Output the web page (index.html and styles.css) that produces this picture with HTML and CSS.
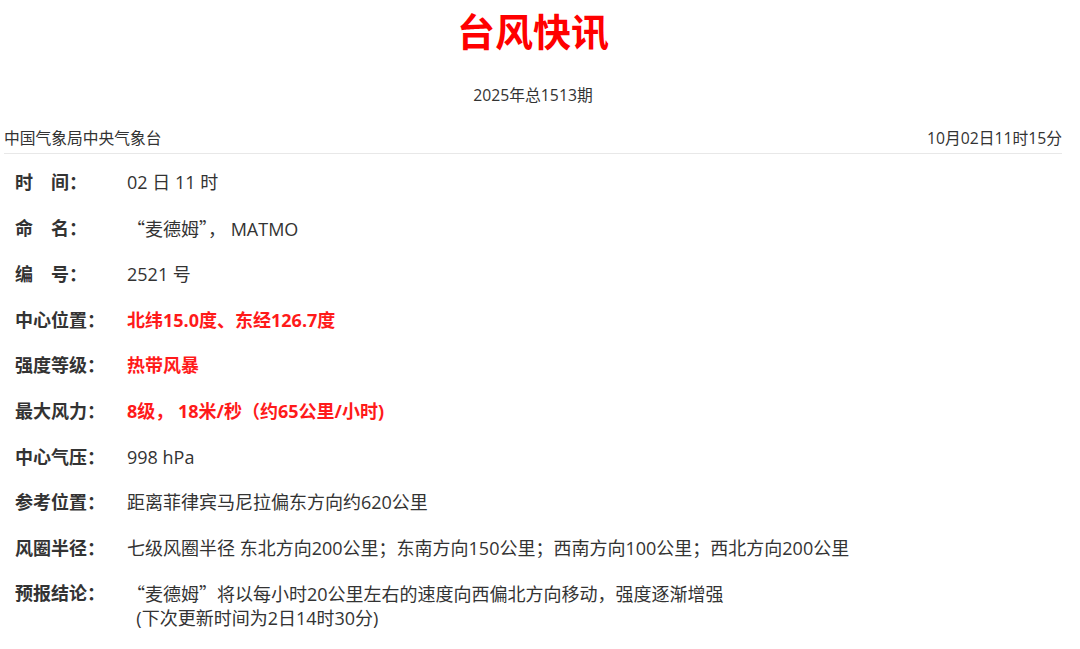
FILE: index.html
```html
<!DOCTYPE html>
<html lang="zh-CN">
<head>
    <meta charset="UTF-8">
    <title>台风快讯</title>
    <meta name="viewport" content="width=device-width, initial-scale=1.0">
    <link rel="stylesheet" href="styles.css">
</head>
<body>
    <div class="page">
        <h1 class="title">台风快讯</h1>
        <div class="issue">2025年总1513期</div>
        <div class="meta">
            <span>中国气象局中央气象台</span>
            <span>10月02日11时15分</span>
        </div>
        <div class="rows">
            <div class="row"><div class="label">时　间：</div><div class="value">02 日 11 时</div></div>
            <div class="row"><div class="label">命　名：</div><div class="value"><span class="cjk">“麦德姆”，</span> MATMO</div></div>
            <div class="row"><div class="label">编　号：</div><div class="value">2521 号</div></div>
            <div class="row"><div class="label">中心位置：</div><div class="value hot">北纬15.0度、东经126.7度</div></div>
            <div class="row"><div class="label">强度等级：</div><div class="value hot">热带风暴</div></div>
            <div class="row"><div class="label">最大风力：</div><div class="value hot">8级， 18米/秒（约65公里/小时)</div></div>
            <div class="row"><div class="label">中心气压：</div><div class="value">998 hPa</div></div>
            <div class="row"><div class="label">参考位置：</div><div class="value">距离菲律宾马尼拉偏东方向约620公里</div></div>
            <div class="row"><div class="label">风圈半径：</div><div class="value">七级风圈半径 东北方向200公里；东南方向150公里；西南方向100公里；西北方向200公里</div></div>
            <div class="row"><div class="label">预报结论：</div><div class="value"><span class="cjk">“麦德姆”</span>将以每小时20公里左右的速度向西偏北方向移动，强度逐渐增强<br>&nbsp;&nbsp;(下次更新时间为2日14时30分)</div></div>
        </div>
    </div>
</body>
</html>
```

FILE: styles.css
```css
body{
    margin: 0;
    padding: 0;
    background-color: #ffffff;
    color: #333333;
    font-family: "Open Sans", "Noto Sans CJK SC", sans-serif;
}
.page{
    width: 1058px;
    margin-left: 4px;
}
.title{
    margin: 0;
    padding-top: 8px;
    height: 48px;
    line-height: 44px;
    text-align: center;
    font-size: 38px;
    font-weight: bold;
    color: #ff0000;
    font-family: "Noto Sans CJK SC", sans-serif;
}
.issue{
    margin-top: 28px;
    line-height: 22px;
    text-align: center;
    font-size: 15.75px;
}
.meta{
    display: flex;
    justify-content: space-between;
    margin-top: 21px;
    padding-bottom: 4px;
    line-height: 22px;
    font-size: 15.75px;
    border-bottom: 1px solid #e8e8e8;
}
.rows{
    padding-top: 6px;
    padding-left: 11px;
}
.row{
    display: flex;
    padding: 11.15px 0;
    font-size: 18px;
    line-height: 23.3px;
}
.label{
    width: 112px;
    flex-shrink: 0;
    font-weight: bold;
}
.cjk{
    font-family: "Noto Sans CJK SC", sans-serif;
}
.hot{
    color: #ff1a1a;
    font-weight: bold;
}
```
